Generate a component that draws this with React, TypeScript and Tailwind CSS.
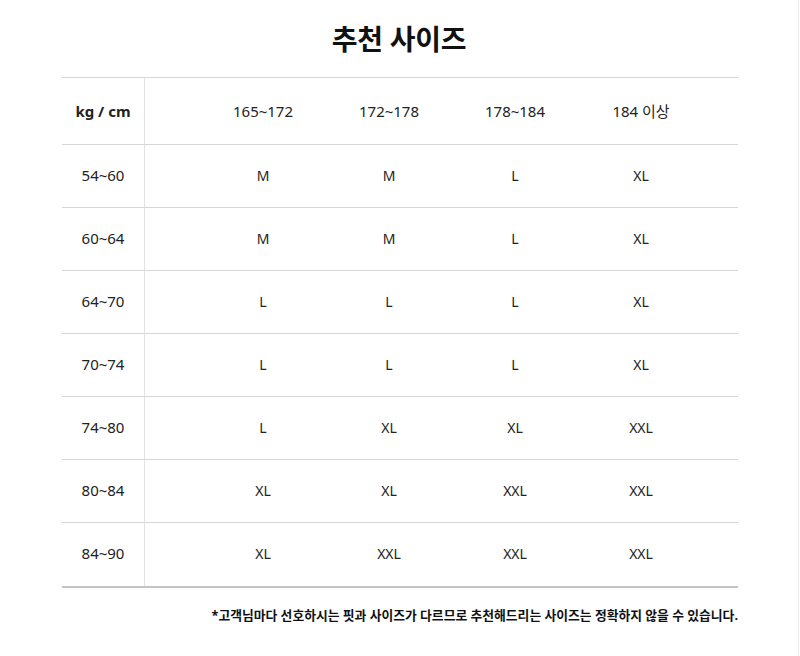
import React from 'react';

const heights = ['165~172', '172~178', '178~184', '184 이상'];

const rows: { weight: string; sizes: string[] }[] = [
  { weight: '54~60', sizes: ['M', 'M', 'L', 'XL'] },
  { weight: '60~64', sizes: ['M', 'M', 'L', 'XL'] },
  { weight: '64~70', sizes: ['L', 'L', 'L', 'XL'] },
  { weight: '70~74', sizes: ['L', 'L', 'L', 'XL'] },
  { weight: '74~80', sizes: ['L', 'XL', 'XL', 'XXL'] },
  { weight: '80~84', sizes: ['XL', 'XL', 'XXL', 'XXL'] },
  { weight: '84~90', sizes: ['XL', 'XXL', 'XXL', 'XXL'] },
];

const font = { fontFamily: '"Noto Sans", "Noto Sans CJK KR", sans-serif' };

const App = () => {
  return (
    <div className="w-[800px] h-[656px] bg-white text-[#222]" style={font}>
      <div className="w-[799px] h-full border-r border-[#ececec]">
        {/* 제목 */}
        <div className="h-[77px] flex items-center justify-center">
          <h1 className="text-[28px] font-bold tracking-[-0.3px] text-[#111]">추천 사이즈</h1>
        </div>

        {/* 표 */}
        <div className="ml-[62px] w-[676px] border-t border-b-2 border-t-[#d6d6d6] border-b-[#c4c4c4]">
          <div className="flex h-[67px] border-b border-[#d6d6d6]">
            <div className="w-[83px] flex items-center justify-center border-r border-[#e2e2e2] text-[15px] font-bold">
              kg / cm
            </div>
            <div className="flex-1 grid grid-cols-4 pl-[55px] pr-[34px] items-center">
              {heights.map((h) => (
                <div key={h} className="text-center text-[15px]">{h}</div>
              ))}
            </div>
          </div>

          {rows.map((row, i) => (
            <div
              key={row.weight}
              className={`flex h-[63px] ${i < rows.length - 1 ? 'border-b border-[#d6d6d6]' : ''}`}
            >
              <div className="w-[83px] flex items-center justify-center pb-[2px] border-r border-[#e2e2e2] text-[15px]">
                {row.weight}
              </div>
              <div className="flex-1 grid grid-cols-4 pl-[55px] pr-[34px] pb-[2px] items-center">
                {row.sizes.map((s, j) => (
                  <div key={j} className="text-center text-[14px]">{s}</div>
                ))}
              </div>
            </div>
          ))}
        </div>

        {/* 안내 문구 */}
        <div className="ml-[62px] w-[676px] pt-[18px] text-right text-[12.8px] font-bold text-[#111]">
          *고객님마다 선호하시는 핏과 사이즈가 다르므로 추천해드리는 사이즈는 정확하지 않을 수 있습니다.
        </div>
      </div>
    </div>
  );
};

export default App;
